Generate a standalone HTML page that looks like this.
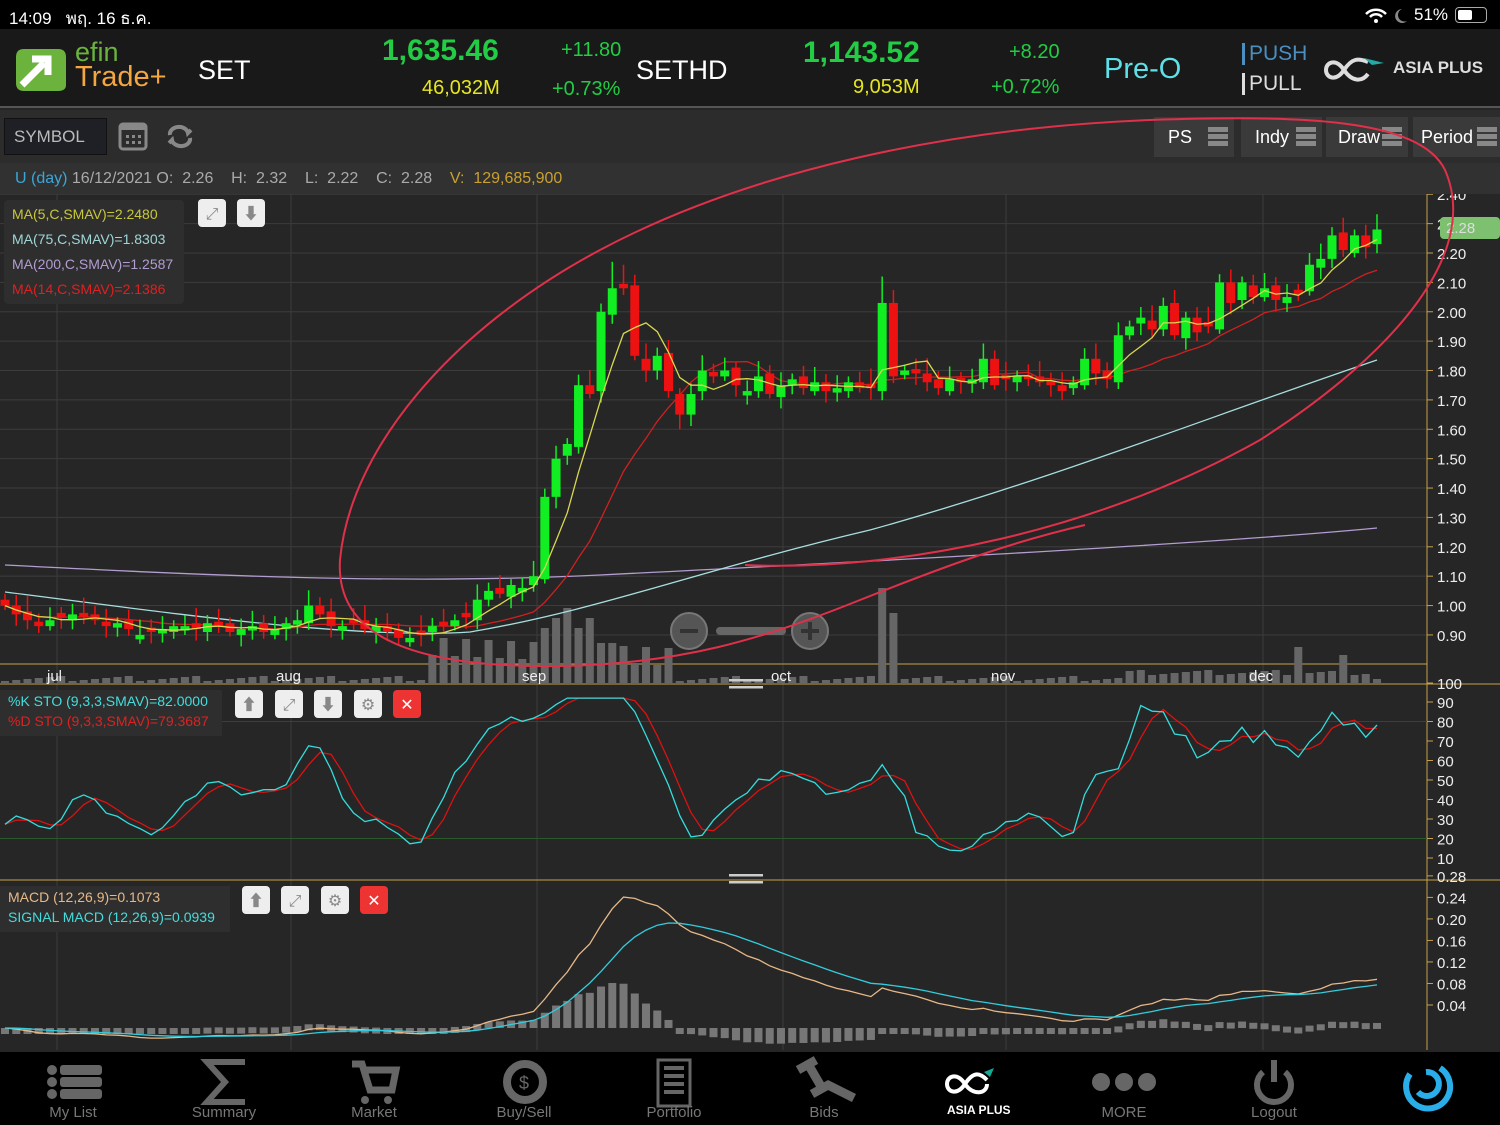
<!DOCTYPE html>
<html><head><meta charset="utf-8">
<style>
*{margin:0;padding:0;box-sizing:border-box}
body{width:1500px;height:1125px;background:#262626;font-family:"Liberation Sans","Noto Sans CJK SC",sans-serif;position:relative;overflow:hidden;color:#ddd}
.abs{position:absolute}
#status{left:0;top:0;width:1500px;height:29px;background:#000;color:#fff;font-size:17px}
#hdr{left:0;top:29px;width:1500px;height:79px;background:#191919;border-bottom:2px solid #555}
#tb{left:0;top:110px;width:1500px;height:53px;background:#2c2c2c}
#info{left:0;top:163px;width:1500px;height:31px;background:#313131;font-size:16px;color:#aaa}
.btn{position:absolute;top:117px;height:40px;background:#3a3a3a;color:#fff;font-size:18px;line-height:40px;padding-left:14px}
.ham{position:absolute;right:6px;top:10px;width:20px}
.ham i{display:block;height:5px;background:#888;margin-bottom:2px}
#nav{left:0;top:1052px;width:1500px;height:73px;background:#000}
.ni{position:absolute;top:1104px;color:#777;font-size:15px;width:100px;text-align:center}
</style></head><body>
<div id="status" class="abs"><span class="abs" style="left:9px;top:5px">14:09&nbsp;&nbsp; พฤ. 16 ธ.ค.</span>
<span class="abs" style="left:1414px;top:5px">51%</span>
<div class="abs" style="left:1455px;top:7px;width:32px;height:16px;border:1.5px solid #aaa;border-radius:4px"><div style="margin:1.5px;width:14px;height:10px;background:#fff;border-radius:2px"></div></div>
<svg class="abs" style="left:1364px;top:6px" width="44" height="18"><path d="M2 8a14 14 0 0 1 20 0M6 11a8 8 0 0 1 12 0" stroke="#fff" stroke-width="2.5" fill="none"/><circle cx="12" cy="15" r="2" fill="#fff"/><path d="M38 3a7 7 0 1 0 5 12a6 6 0 0 1 -5 -12z" fill="#888"/></svg>
</div>
<div id="hdr" class="abs">
<svg class="abs" style="left:12px;top:16px" width="56" height="48"><path d="M4 12q0-8 8-8h34q8 0 8 8v28q0 6-8 6h-34q-8 0-8-8z" fill="#6cb33e"/><path d="M10 40l22-22M20 14h16v16" stroke="#fff" stroke-width="7" fill="none"/></svg>
<div class="abs" style="left:75px;top:10px;font-size:27px;color:#6cb33e;line-height:26px">efin</div>
<div class="abs" style="left:75px;top:33px;font-size:29px;color:#f4a640;line-height:30px">Trade+</div>
<div class="abs" style="left:198px;top:26px;font-size:27px;color:#fff">SET</div>
<div class="abs" style="left:382px;top:5px;font-size:30px;color:#22cc44;font-weight:bold">1,635.46</div>
<div class="abs" style="left:422px;top:48px;font-size:20px;color:#e6e620">46,032M</div>
<div class="abs" style="left:561px;top:10px;font-size:20px;color:#22cc44">+11.80</div>
<div class="abs" style="left:552px;top:49px;font-size:20px;color:#22cc44">+0.73%</div>
<div class="abs" style="left:636px;top:26px;font-size:27px;color:#fff">SETHD</div>
<div class="abs" style="left:803px;top:7px;font-size:30px;color:#22cc44;font-weight:bold">1,143.52</div>
<div class="abs" style="left:853px;top:47px;font-size:20px;color:#e6e620">9,053M</div>
<div class="abs" style="left:1009px;top:12px;font-size:20px;color:#22cc44">+8.20</div>
<div class="abs" style="left:991px;top:47px;font-size:20px;color:#22cc44">+0.72%</div>
<div class="abs" style="left:1104px;top:24px;font-size:29px;color:#5ee0e8">Pre-O</div>
<div class="abs" style="left:1242px;top:14px;font-size:21px;color:#4a8fc0;border-left:3px solid #4a8fc0;padding-left:4px;line-height:22px">PUSH</div>
<div class="abs" style="left:1242px;top:44px;font-size:21px;color:#ddd;border-left:3px solid #ddd;padding-left:4px;line-height:22px">PULL</div>
<svg class="abs" style="left:1324px;top:26px" width="70" height="30"><path d="M20 15c-8-12-18-8-18 0s10 12 18 0s14-12 24-8M20 15c8 12 18 12 24 4" stroke="#ddd" stroke-width="4" fill="none"/><path d="M40 3l20 5-12 2z" fill="#2aa"/></svg>
<div class="abs" style="left:1393px;top:29px;font-size:17px;color:#ddd;font-weight:bold">ASIA PLUS</div>
</div>
<div id="tb" class="abs">
<div class="abs" style="left:4px;top:8px;width:103px;height:37px;background:#1e2026;border:1px solid #111;color:#bbb;font-size:17px;line-height:36px;padding-left:9px">SYMBOL</div>
<svg class="abs" style="left:118px;top:10px" width="80" height="32"><rect x="2" y="4" width="26" height="25" rx="3" fill="none" stroke="#888" stroke-width="3"/><rect x="2" y="4" width="26" height="6" fill="#888"/><g fill="#888"><rect x="8" y="15" width="3" height="3"/><rect x="14" y="15" width="3" height="3"/><rect x="20" y="15" width="3" height="3"/><rect x="8" y="21" width="3" height="3"/><rect x="14" y="21" width="3" height="3"/><rect x="20" y="21" width="3" height="3"/></g><path d="M52 15a9 7 0 0 1 18-2l3-3M72 18a9 7 0 0 1 -18 2l-3 3" stroke="#888" stroke-width="4" fill="none"/></svg>
</div>
<div class="btn" style="left:1154px;width:80px">PS<div class="ham"><i></i><i></i><i></i></div></div>
<div class="btn" style="left:1241px;width:81px">Indy<div class="ham"><i></i><i></i><i></i></div></div>
<div class="btn" style="left:1326px;width:82px;padding-left:12px">Draw<div class="ham"><i></i><i></i><i></i></div></div>
<div class="btn" style="left:1413px;width:87px;padding-left:8px">Period<div class="ham" style="right:3px"><i></i><i></i><i></i></div></div>
<div id="info" class="abs"><span class="abs" style="left:15px;top:7px"><span style="color:#3ba6d8">U (day)</span> 16/12/2021 O:&nbsp; 2.26 &nbsp;&nbsp; H:&nbsp; 2.32 &nbsp;&nbsp; L:&nbsp; 2.22 &nbsp;&nbsp; C:&nbsp; 2.28 &nbsp;&nbsp; <span style="color:#c9a030">V:&nbsp; 129,685,900</span></span></div>

<svg id="ch" class="abs" style="left:0;top:194px" width="1500" height="858" viewBox="0 194 1500 858"></svg>

<div class="abs" style="left:4px;top:200px;width:180px;height:104px;background:#2e2e2e;border-radius:4px;font-size:14px;line-height:25px;padding:2px 0 0 8px">
<div style="color:#c8c83a">MA(5,C,SMAV)=2.2480</div><div style="color:#9fd6d6">MA(75,C,SMAV)=1.8303</div><div style="color:#b39cd0">MA(200,C,SMAV)=1.2587</div><div style="color:#e02020">MA(14,C,SMAV)=2.1386</div></div>
<div class="abs" style="left:0;top:690px;width:222px;height:46px;background:#2e2e2e;font-size:14px;line-height:20px;padding:1px 0 0 8px"><div style="color:#4dd">%K STO (9,3,3,SMAV)=82.0000</div><div style="color:#d22">%D STO (9,3,3,SMAV)=79.3687</div></div>
<div class="abs" style="left:0;top:886px;width:230px;height:46px;background:#2e2e2e;font-size:14px;line-height:20px;padding:1px 0 0 8px"><div style="color:#e6b888">MACD (12,26,9)=0.1073</div><div style="color:#4dd">SIGNAL MACD (12,26,9)=0.0939</div></div>

<svg class="abs" style="left:0;top:0;pointer-events:none" width="1500" height="1125"><path d="M745 565C900 572 1100 530 1260 440C1400 350 1480 250 1445 170C1420 118 1300 115 1150 120C950 128 750 170 600 250C450 330 350 450 340 560C335 640 420 668 560 666C680 664 760 640 860 600C960 560 1020 540 1085 525" stroke="#e0304a" stroke-width="2" fill="none"/></svg>

<div id="nav" class="abs"></div>
<svg class="abs" style="left:0;top:1052px" width="1500" height="73">
<g fill="#666"><circle cx="52" cy="18" r="5"/><circle cx="52" cy="30" r="5"/><circle cx="52" cy="42" r="5"/><rect x="60" y="13" width="42" height="10" rx="3"/><rect x="60" y="25" width="42" height="10" rx="3"/><rect x="60" y="37" width="42" height="10" rx="3"/></g>
<path d="M245 10h-38l18 20-18 20h38" stroke="#666" stroke-width="6" fill="none"/>
<path d="M352 12h10l8 26h22l4-20h-30" stroke="#666" stroke-width="7" fill="none"/><circle cx="365" cy="48" r="4" fill="#666"/><circle cx="388" cy="48" r="4" fill="#666"/>
<circle cx="525" cy="30" r="18" stroke="#666" stroke-width="8" fill="none"/><text x="519" y="37" font-size="18" fill="#666">$</text>
<rect x="658" y="8" width="32" height="46" stroke="#666" stroke-width="3" fill="none"/><g fill="#666"><rect x="664" y="14" width="20" height="4"/><rect x="664" y="22" width="20" height="4"/><rect x="664" y="30" width="20" height="4"/><rect x="664" y="38" width="20" height="4"/></g>
<path d="M808 12l14 24M798 18l18-10M812 42l18-10M826 32l28 14" stroke="#666" stroke-width="9" fill="none"/>
<path d="M965 32c-8-12-18-8-18 0s10 12 18 0s14-12 22-4" stroke="#fff" stroke-width="4" fill="none"/><path d="M965 32c8 12 22 10 22 0" stroke="#fff" stroke-width="4" fill="none"/><path d="M984 20l10-4-4 9z" fill="#1a9"/>
<text x="947" y="62" font-size="12" fill="#fff" font-weight="bold">ASIA PLUS</text>
<g fill="#666"><circle cx="1101" cy="30" r="9"/><circle cx="1124" cy="30" r="9"/><circle cx="1147" cy="30" r="9"/></g>
<path d="M1263 20a17 17 0 1 0 22 0M1274 8v22" stroke="#666" stroke-width="6" fill="none"/>
<path d="M1410 22a22 22 0 1 0 30-6M1418 40a12 12 0 1 0 8-20" stroke="#2aaeea" stroke-width="6" fill="none"/>
</svg>
<div class="ni" style="left:23px">My List</div><div class="ni" style="left:174px">Summary</div><div class="ni" style="left:324px">Market</div><div class="ni" style="left:474px">Buy/Sell</div><div class="ni" style="left:624px">Portfolio</div><div class="ni" style="left:774px">Bids</div><div class="ni" style="left:1074px">MORE</div><div class="ni" style="left:1224px">Logout</div>

<script>
(function(){
var S=document.getElementById('ch'),h='';
function yP(p){return 253+(2.2-p)*293.8}
h+='<rect x="0" y="194" width="1500" height="858" fill="#262626"/>';
var g='#3c3c3c';
for(var p=0.9;p<=2.41;p+=0.1){var y=yP(p);h+='<line x1="0" x2="1427" y1="'+y+'" y2="'+y+'" stroke="'+g+'"/>';h+='<line x1="1427" x2="1433" y1="'+y+'" y2="'+y+'" stroke="#c8a04a"/><text x="1437" y="'+(y+6)+'" font-size="15" fill="#eee">'+p.toFixed(2)+'</text>';}
[57,291,537,783,1006,1263].forEach(function(x){h+='<line x1="'+x+'" x2="'+x+'" y1="194" y2="1050" stroke="'+g+'"/>'});
h+='<line x1="0" x2="1427" y1="664" y2="664" stroke="#c8a04a"/><line x1="0" x2="1500" y1="684" y2="684" stroke="#c8a04a"/><line x1="0" x2="1500" y1="880" y2="880" stroke="#c8a04a"/>';
h+='<line x1="1427" x2="1427" y1="194" y2="1050" stroke="#c8a04a"/>';
var C=[1.0,0.97,0.95,0.93,0.95,0.96,0.97,0.96,0.95,0.93,0.94,0.92,0.90,0.91,0.92,0.93,0.93,0.92,0.94,0.93,0.91,0.92,0.93,0.91,0.92,0.94,0.95,1.0,0.97,0.93,0.93,0.94,0.92,0.93,0.91,0.89,0.89,0.90,0.93,0.93,0.95,0.96,1.02,1.05,1.04,1.07,1.06,1.10,1.37,1.50,1.55,1.75,1.72,2.00,2.08,2.08,1.85,1.80,1.85,1.73,1.65,1.72,1.80,1.78,1.80,1.75,1.73,1.78,1.72,1.75,1.77,1.74,1.76,1.73,1.74,1.76,1.74,1.74,2.03,1.78,1.80,1.79,1.76,1.74,1.77,1.76,1.77,1.84,1.75,1.77,1.78,1.77,1.76,1.75,1.73,1.76,1.84,1.79,1.77,1.92,1.95,1.98,1.94,2.02,1.92,1.98,1.93,1.95,2.10,2.03,2.10,2.05,2.08,2.04,2.05,2.06,2.16,2.18,2.26,2.21,2.26,2.22,2.28];
var n=C.length,dx=1372/(n-1),O=[],Hh=[],Lw=[],i,j,x;
for(i=0;i<n;i++){var o=i?C[i-1]+((i%3)-1)*0.01:1.02;if(Math.abs(o-C[i])<0.012)o=C[i]+(i%2?0.015:-0.015);O[i]=o;Hh[i]=Math.max(o,C[i])+0.02+((i*7)%5)*0.008;Lw[i]=Math.min(o,C[i])-0.015-((i*3)%4)*0.008;}
Hh[78]=2.12;Hh[54]=2.17;Hh[55]=2.16;Lw[60]=1.60;Hh[116]=2.20;Hh[119]=2.32;
for(i=0;i<n;i++){x=5+i*dx;var v=2+((i*13)%6);if(i>=38&&i<60)v=12+((i*17)%35);if(i>=48&&i<=52)v=55+i%3*10;if(i==53||i==54)v=40;if(i==78)v=95;if(i==79)v=70;if(i==115)v=30;if(i==119)v=22;if(i>=100&&i<=121)v+=6;h+='<rect x="'+(x-4)+'" y="'+(683-v)+'" width="8" height="'+v+'" fill="#666"/>';}
[["jul",47],["aug",276],["sep",522],["oct",771],["nov",991],["dec",1249]].forEach(function(a){h+='<text x="'+a[1]+'" y="681" font-size="15" fill="#eee">'+a[0]+'</text>'});
function ma(k){var r=[];for(var i=0;i<n;i++){var s=0,c=0;for(var j=Math.max(0,i-k+1);j<=i;j++){s+=C[j];c++}r.push(s/c)}return r}
function pl(a,col,f,sw){var s='';for(var i=0;i<a.length;i++){var v=f(a[i],i);if(v==null)continue;s+=(s?'L':'M')+(5+i*dx).toFixed(1)+' '+v.toFixed(1)}h+='<path d="'+s+'" stroke="'+col+'" stroke-width="'+(sw||1.3)+'" fill="none"/>'}
h+='<path d="M5 565C200 575 400 585 600 575S1200 545 1377 528" stroke="#b39cd0" stroke-width="1.3" fill="none"/>';
h+='<path d="M5 592C150 610 350 640 470 632C600 610 700 570 870 530C1050 480 1200 420 1377 360" stroke="#a8dede" stroke-width="1.3" fill="none"/>';
pl(ma(14),'#d02020',function(v){return yP(v)});
for(i=0;i<n;i++){x=5+i*dx;var up=C[i]>=O[i],col=up?'#11ee22':'#ee1111';var tt=yP(Math.max(O[i],C[i])),bb=yP(Math.min(O[i],C[i]));h+='<line x1="'+x+'" x2="'+x+'" y1="'+yP(Hh[i])+'" y2="'+yP(Lw[i])+'" stroke="'+col+'" stroke-width="1.5"/><rect x="'+(x-4.5)+'" y="'+tt+'" width="9" height="'+Math.max(2,bb-tt)+'" fill="'+col+'"/>';}
pl(ma(5),'#d8d850',function(v){return yP(v)});
h+='<rect x="1440" y="217" width="60" height="22" rx="4" fill="#7cc070"/><text x="1446" y="233" font-size="15" fill="#ddd">2.28</text>';
h+='<circle cx="689" cy="631" r="18" fill="#555" stroke="#777" stroke-width="2"/><rect x="680" y="629" width="18" height="4" fill="#333"/><rect x="716" y="627" width="70" height="8" rx="4" fill="#666"/><circle cx="810" cy="631" r="18" fill="#555" stroke="#777" stroke-width="2"/><rect x="801" y="629" width="18" height="4" fill="#333"/><rect x="808" y="622" width="4" height="18" fill="#333"/>';
h+='<rect x="729" y="679" width="34" height="2.5" fill="#ccc"/><rect x="729" y="686" width="34" height="2.5" fill="#ccc"/><rect x="729" y="874" width="34" height="2.5" fill="#ccc"/><rect x="729" y="881" width="34" height="2.5" fill="#ccc"/>';
function yS(v){return 858-(v-10)*1.95}
for(var q=10;q<=100;q+=10){var yy=q==100?683:yS(q);h+='<line x1="1427" x2="1433" y1="'+yy+'" y2="'+yy+'" stroke="#c8a04a"/><text x="1437" y="'+(yy+6)+'" font-size="15" fill="#eee">'+q+'</text>'}
h+='<line x1="0" x2="1427" y1="'+yS(80)+'" y2="'+yS(80)+'" stroke="#6a2a2a"/><line x1="0" x2="1427" y1="'+yS(20)+'" y2="'+yS(20)+'" stroke="#2a5a2a"/>';
var K=[];for(i=0;i<n;i++){var hh=-9,ll=9;for(j=Math.max(0,i-8);j<=i;j++){hh=Math.max(hh,Hh[j]);ll=Math.min(ll,Lw[j])}K.push(100*(C[i]-ll)/(hh-ll))}
function sm(a,k){var r=[];for(var i=0;i<a.length;i++){var s=0,c=0;for(var j=Math.max(0,i-k+1);j<=i;j++){s+=a[j];c++}r.push(s/c)}return r}
var Ks=sm(K,3),Ds=sm(Ks,3);
pl(Ds,'#dd1111',function(v){return yS(Math.max(12,Math.min(92,v)))});
pl(Ks,'#33dddd',function(v){return yS(Math.max(12,Math.min(92,v)))});
function yM(v){return 1005-(v-0.04)*538}
[0.28,0.24,0.20,0.16,0.12,0.08,0.04].forEach(function(v){var y=yM(v);h+='<line x1="1427" x2="1433" y1="'+y+'" y2="'+y+'" stroke="#c8a04a"/><text x="1437" y="'+(y+6)+'" font-size="15" fill="#eee">'+v.toFixed(2)+'</text>'});
function ema(a,k){var r=[],m=2/(k+1);for(var i=0;i<a.length;i++)r.push(i?a[i]*m+r[i-1]*(1-m):a[i]);return r}
var e12=ema(C,12),e26=ema(C,26),M=[],Sg;for(i=0;i<n;i++)M.push(e12[i]-e26[i]);Sg=ema(M,9);
for(i=0;i<n;i++){x=5+i*dx;var d=(M[i]-Sg[i])*538*0.8,y0=1028;h+='<rect x="'+(x-4)+'" y="'+(d>0?y0-d:y0)+'" width="8" height="'+Math.max(6,Math.abs(d))+'" fill="#777"/>'}
pl(M,'#e6b888',function(v){return 1028-v*480});
pl(Sg,'#33ccdd',function(v){return 1028-v*480});
function bt(x,y,c,t){h+='<rect x="'+x+'" y="'+y+'" width="28" height="28" rx="4" fill="'+c+'"/><text x="'+(x+14)+'" y="'+(y+20)+'" text-anchor="middle" font-size="16" fill="'+(c=='#e33'?'#fff':'#888')+'">'+t+'</text>'}
bt(198,199,'#eee','⤢');bt(237,199,'#eee','⬇');
bt(235,690,'#eee','⬆');bt(275,690,'#eee','⤢');bt(314,690,'#eee','⬇');bt(354,690,'#eee','⚙');bt(393,690,'#e33','✕');
bt(242,886,'#eee','⬆');bt(281,886,'#eee','⤢');bt(321,886,'#eee','⚙');bt(360,886,'#e33','✕');
S.innerHTML=h;
})();
</script>
</body></html>
